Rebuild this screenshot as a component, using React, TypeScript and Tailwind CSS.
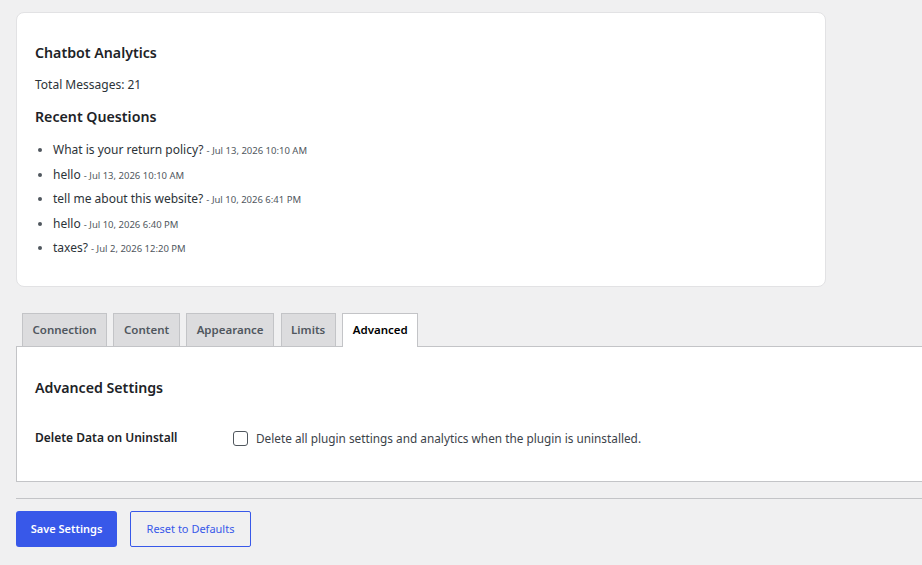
const questions = [
  { text: "What is your return policy?", date: "Jul 13, 2026 10:10 AM" },
  { text: "hello", date: "Jul 13, 2026 10:10 AM" },
  { text: "tell me about this website?", date: "Jul 10, 2026 6:41 PM" },
  { text: "hello", date: "Jul 10, 2026 6:40 PM" },
  { text: "taxes?", date: "Jul 2, 2026 12:20 PM" },
];

const tabs = ["Connection", "Content", "Appearance", "Limits", "Advanced"];

export default function App() {
  const active = "Advanced";

  return (
    <div
      className="h-[565px] w-[922px] overflow-hidden bg-[#f0f0f1] px-4 pt-3 text-[12px] text-[#2c3338]"
      style={{ fontFamily: '"Noto Sans", "Open Sans", sans-serif' }}
    >
      {/* analytics card */}
      <div className="w-[810px] rounded-lg border border-[#e2e2e4] bg-white px-[18px] pb-[29px] pt-[30px]">
        <h2 className="text-[14.2px] font-semibold leading-[20px] text-[#1d2327]">Chatbot Analytics</h2>
        <p className="mt-[13px] leading-[18px]">Total Messages: 21</p>
        <h3 className="mt-[13px] text-[14.2px] font-semibold leading-[20px] text-[#1d2327]">Recent Questions</h3>
        <ul className="mt-[14px] flex list-disc flex-col gap-[6.5px] pl-[18px]">
          {questions.map((q, i) => (
            <li key={i} className="h-[18px] leading-[18px] marker:text-[#50575e]">
              {q.text}{" "}
              <span className="text-[9.5px] leading-none text-[#50575e]">- {q.date}</span>
            </li>
          ))}
        </ul>
      </div>

      {/* tabs */}
      <nav className="mt-[26px] flex gap-[6.5px] pl-[6px]">
        {tabs.map((t) => (
          <div
            key={t}
            className={
              t === active
                ? "relative z-10 -mb-px border border-b-0 border-[#c3c4c7] bg-white px-[9.5px] pb-[7px] pt-[6px] text-[11.5px] font-semibold leading-[20px] text-black"
                : "border border-b-0 border-[#c3c4c7] bg-[#dcdcde] px-[9.5px] pb-[6px] pt-[6px] text-[11.5px] font-semibold leading-[20px] text-[#50575e]"
            }
          >
            {t}
          </div>
        ))}
      </nav>

      <section className="w-[930px] border border-[#c3c4c7] bg-white px-[18px] pb-[34px] pt-[31px]">
        <h2 className="text-[14.2px] font-semibold leading-[20px] text-[#1d2327]">Advanced Settings</h2>
        <div className="mt-[31px] flex items-center">
          <div className="w-[198px] font-semibold leading-[18px] text-[#1d2327]">Delete Data on Uninstall</div>
          <label className="flex items-center gap-[8px] text-[#3c434a]">
            <span className="h-[15px] w-[15px] rounded-[3px] border border-[#50575e] bg-white" />
            <span className="text-[11.8px] leading-[18px]">
              Delete all plugin settings and analytics when the plugin is uninstalled.
            </span>
          </label>
        </div>
      </section>

      <div className="mt-[16px] w-[930px] border-t border-[#c3c4c7]" />

      <div className="mt-[12px] flex gap-[13px]">
        <button className="h-[36px] w-[101px] rounded-[3px] bg-[#3858e9] text-[11px] font-semibold text-white">
          Save Settings
        </button>
        <button className="h-[36px] w-[121px] rounded-[2px] border border-[#3858e9] bg-transparent text-[11px] text-[#3858e9]">
          Reset to Defaults
        </button>
      </div>
    </div>
  );
}
